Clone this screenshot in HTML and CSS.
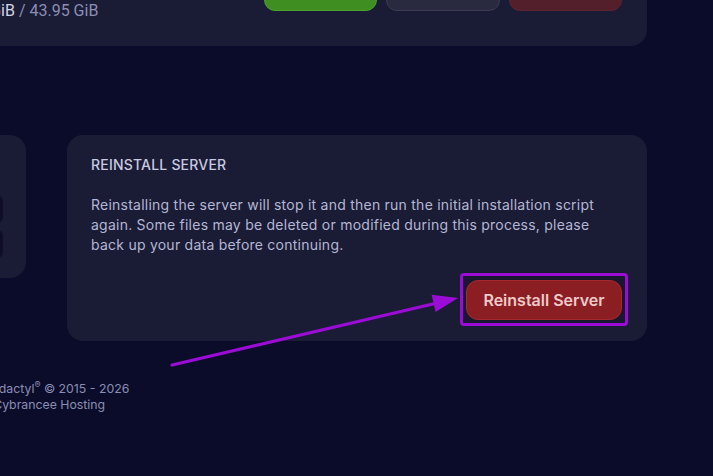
FILE: index.html
```html
<!DOCTYPE html>
<html lang="en">
<head>
  <meta charset="UTF-8">
  <title>Settings | Cybrancee Hosting</title>
  <meta name="viewport" content="width=device-width, initial-scale=1.0">
  <link rel="stylesheet" href="styles.css">
</head>
<body>
  <div class="page">
    <div class="server-bar">
      <div class="usage"><span class="used">3.71 GiB</span> / 43.95 GiB</div>
      <div class="power">
        <button class="btn-start">Start</button>
        <button class="btn-restart">Restart</button>
        <button class="btn-stop">Stop</button>
      </div>
    </div>

    <div class="settings">
      <div class="card debug">
        <h3>Debug Information</h3>
        <div class="row">
          <span>Node</span>
          <code>US-East-01</code>
        </div>
        <div class="row">
          <span>Server ID</span>
          <code>8c2f1a9e</code>
        </div>
      </div>

      <div class="card reinstall">
        <h3>Reinstall Server</h3>
        <p>Reinstalling the server will stop it and then run the initial installation script again. Some files may be deleted or modified during this process, please back up your data before continuing.</p>
        <div class="actions">
          <span class="highlight">
            <button class="btn-danger">Reinstall Server</button>
          </span>
        </div>
      </div>
    </div>

    <footer class="footer">
      <div>Pterodactyl<sup>®</sup> © 2015 - 2026</div>
      <div>and Cybrancee Hosting</div>
    </footer>
  </div>

  <!-- pointer drawn on top of the page -->
  <svg class="pointer" width="713" height="476" viewBox="0 0 713 476">
    <line x1="172" y1="365" x2="437" y2="303" stroke="#9c0cd7" stroke-width="3.2" stroke-linecap="round" />
    <polygon points="458,298 435.6,312 431.6,294.8" fill="#9c0cd7" />
  </svg>
</body>
</html>
```

FILE: styles.css
```css
body {
  margin: 0;
  font-family: 'Inter', sans-serif;
  background-color: #0b0c29;
  color: #b4b7d4;
  overflow: hidden;
  height: 476px;
}
.page {
  width: 887px;
  margin-left: -240px;
}
.server-bar {
  height: 106px;
  margin-top: -60px;
  box-sizing: border-box;
  padding: 24px 25px 35px 195px;
  background: #1a1b35;
  border-radius: 0 0 16px 16px;
  display: flex;
  justify-content: space-between;
  align-items: flex-end;
}
.usage {
  font-family: 'Roboto', sans-serif;
  font-size: 16px;
  line-height: 18px;
  color: #8b8fb3;
  white-space: nowrap;
  margin-bottom: -9px;
}
.usage .used {
  color: #d3d5e9;
}
.power {
  display: flex;
  gap: 9px;
}
.power button {
  width: 113px;
  height: 40px;
  border-radius: 11px;
  font-family: 'Inter', sans-serif;
  font-size: 14px;
  font-weight: 600;
  color: #fff;
}
.power .btn-restart {
  width: 114px;
}
.btn-start {
  background: #3e8e21;
  border: 1px solid #4ea12b;
}
.btn-restart {
  background: #292a3f;
  border: 1px solid #3c3d54;
}
.btn-stop {
  background: #531f2a;
  border: 1px solid #5c2530;
}
.settings {
  display: grid;
  grid-template-columns: 1fr 580px;
  gap: 41px;
  align-items: start;
  margin-top: 89px;
}
.card {
  background: #1a1b35;
  border-radius: 16px;
  box-sizing: border-box;
}
.card h3 {
  margin: 0;
  font-size: 14px;
  line-height: 20px;
  font-weight: 500;
  letter-spacing: 0.2px;
  text-transform: uppercase;
  color: #c8cae0;
}
.debug {
  padding: 20px 23px 20px 24px;
}
.debug h3 {
  margin-bottom: 20px;
}
.row {
  display: flex;
  justify-content: space-between;
  align-items: center;
  font-size: 14px;
  margin-bottom: 7px;
}
.row:last-child {
  margin-bottom: 0;
}
.row code {
  display: block;
  width: 120px;
  height: 28px;
  line-height: 28px;
  padding: 0 10px;
  box-sizing: border-box;
  background: #0e0f26;
  border-radius: 6px;
  font-size: 12px;
  color: #9da0c2;
}
.reinstall {
  padding: 20px 19px 15px 24px;
}
.reinstall p {
  margin: 20px 14px 0 0;
  font-size: 14px;
  line-height: 20px;
  letter-spacing: 0.24px;
}
.actions {
  display: flex;
  justify-content: flex-end;
  margin-top: 18px;
}
.highlight {
  display: inline-block;
  padding: 4px 3px 3px 3px;
  border: 3px solid #9c0cd7;
  border-radius: 4px;
  background: #17182f;
}
.btn-danger {
  display: block;
  width: 156px;
  height: 40px;
  background: #8a1e23;
  border: 1px solid #a2292d;
  border-radius: 12px;
  color: #f0c9ca;
  font-family: 'Inter', sans-serif;
  font-size: 16px;
  font-weight: 600;
  cursor: pointer;
}
.footer {
  margin-top: 40px;
  padding-left: 208px;
  font-size: 12.3px;
  line-height: 16px;
  color: #8a8eb4;
}
.footer sup {
  font-size: 9px;
  line-height: 0;
}
.pointer {
  position: absolute;
  top: 0;
  left: 0;
  pointer-events: none;
}
```
